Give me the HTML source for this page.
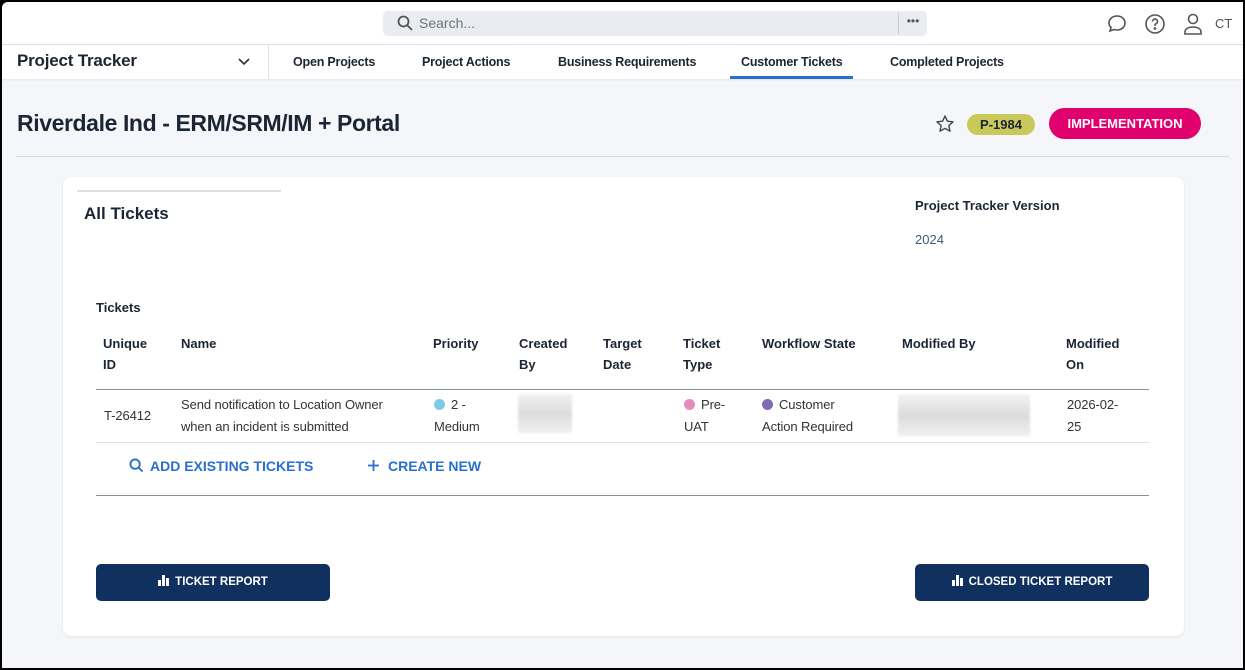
<!DOCTYPE html>
<html><head><meta charset="utf-8"><style>
*{box-sizing:border-box;margin:0;padding:0}
body{width:1245px;height:670px;overflow:hidden;background:#000;font-family:"Liberation Sans",sans-serif;color:#1b2533}
.frame{position:absolute;left:2px;top:2px;width:1241px;height:666px;background:#f5f6f9;border-radius:6px 0 0 0;overflow:hidden}
.top{position:absolute;left:0;top:0;width:100%;height:43px;background:#fff;border-bottom:1px solid #dfe2e6}
.search{position:absolute;left:381px;top:9px;width:544px;height:25px;background:#e9ecf0;border-radius:5px;font-size:14px;color:#6b7480;padding:4px 0 0 36px}
.search .dots{position:absolute;right:0;top:2px;width:29px;height:21px;border-left:1px solid #c9cdd2;text-align:center;font-size:12px;color:#555;line-height:17px}
.nav{position:absolute;left:0;top:43px;width:100%;height:34px;background:#fff;box-shadow:0 1px 2px rgba(0,0,0,.08)}
.nav .pt{position:absolute;left:15px;top:6px;font-size:17px;font-weight:bold;color:#1b2533;letter-spacing:-.2px}
.nav .sep{position:absolute;left:266px;top:0;height:34px;border-left:1px solid #dfe2e6}
.nav a{position:absolute;top:10px;font-size:12.5px;font-weight:bold;color:#1b2533;text-decoration:none;letter-spacing:-.2px}
.ul{position:absolute;left:728px;top:31px;width:123px;height:3px;background:#2a6fcf}
h1{position:absolute;left:15px;top:108px;font-size:23px;font-weight:bold;color:#1b2533;letter-spacing:-.4px}
.pill1{position:absolute;left:965px;top:112px;width:68px;height:21px;border-radius:11px;background:#c9c85a;font-size:13px;font-weight:bold;text-align:center;line-height:21px;color:#1b2533}
.pill2{position:absolute;left:1047px;top:106px;width:152px;height:31px;border-radius:16px;background:#e0006e;color:#fff;font-size:13px;font-weight:bold;text-align:center;line-height:31px}
.hr{position:absolute;left:14px;top:154px;width:1213px;border-top:1px solid #d4d7dc}
.card{position:absolute;left:61px;top:175px;width:1121px;height:459px;background:#fff;border-radius:8px;box-shadow:0 1px 3px rgba(0,0,0,.08)}
.t{position:absolute;font-size:13px;line-height:21px}
.b{font-weight:bold}
.r{color:#333;line-height:22px;letter-spacing:-.1px}
.line{position:absolute;border-top:1px solid #8a8f96}
.btn{position:absolute;top:387px;height:37px;background:#10305f;border-radius:5px;color:#fff;font-size:11.5px;font-weight:bold;text-align:center;line-height:37px}
.dot{display:inline-block;width:11px;height:11px;border-radius:50%;margin-right:6px;vertical-align:-1px}
.blur{position:absolute;background:linear-gradient(#f2f2f2,#dcdcdc,#f0f0f0);filter:blur(1px)}
.lnk{position:absolute;top:281px;color:#2a6fcf;font-size:14px;font-weight:bold;line-height:17px}
</style></head><body><div class="frame">
<div class="top">
<div class="search"><svg style="position:absolute;left:14px;top:4px" width="16" height="16" viewBox="0 0 16 16"><circle cx="6.5" cy="6.5" r="5" fill="none" stroke="#555" stroke-width="1.8"/><path d="M10 10l5 5" stroke="#555" stroke-width="1.8"/></svg>Search...<div class="dots">•••</div></div>
<svg style="position:absolute;left:1104px;top:11px" width="22" height="22" viewBox="0 0 22 22" fill="none" stroke="#555" stroke-width="1.6"><path d="M11 3c4.5 0 8 3 8 7s-3.5 7-8 7c-1 0-2-.2-3-.5L4 18l1-3.5C3.7 13.2 3 11.7 3 10c0-4 3.5-7 8-7z"/></svg>
<svg style="position:absolute;left:1142px;top:11px" width="22" height="22" viewBox="0 0 22 22" fill="none" stroke="#555" stroke-width="1.6"><circle cx="11" cy="11" r="9"/><path d="M8.5 8.5a2.5 2.5 0 1 1 3.5 2.3c-.7.3-1 .8-1 1.5v.7"/><circle cx="11" cy="15.5" r=".6" fill="#555"/></svg>
<svg style="position:absolute;left:1180px;top:10px" width="22" height="24" viewBox="0 0 22 24" fill="none" stroke="#555" stroke-width="1.6"><circle cx="11" cy="7" r="4.5"/><path d="M3 22v-2c0-3 3-5 8-5s8 2 8 5v2z"/></svg>
<div class="t" style="left:1213px;top:11px;color:#555">CT</div>
</div>
<div class="nav"><div class="pt">Project Tracker</div>
<svg style="position:absolute;left:235px;top:12px" width="14" height="10" viewBox="0 0 14 10"><path d="M2 2l5 5 5-5" fill="none" stroke="#333" stroke-width="1.6"/></svg>
<div class="sep"></div>
<a style="left:291px">Open Projects</a><a style="left:420px">Project Actions</a><a style="left:556px">Business Requirements</a><a style="left:739px">Customer Tickets</a><a style="left:888px">Completed Projects</a>
<div class="ul"></div></div>
<h1>Riverdale Ind - ERM/SRM/IM + Portal</h1>
<svg style="position:absolute;left:933px;top:112px" width="20" height="20" viewBox="0 0 20 20"><path d="M10 2l2.4 5.2 5.6.6-4.2 3.8 1.2 5.6L10 14.4 5 17.2l1.2-5.6L2 7.8l5.6-.6z" fill="none" stroke="#444" stroke-width="1.4" stroke-linejoin="round"/></svg>
<div class="pill1">P-1984</div><div class="pill2">IMPLEMENTATION</div>
<div class="hr"></div>
<div class="card">
<div style="position:absolute;left:14px;top:13px;width:204px;border-top:2px solid #dcdfe3"></div>
<div class="t b" style="left:21px;top:26px;font-size:17px">All Tickets</div>
<div class="t b" style="left:852px;top:18px">Project Tracker Version</div>
<div class="t" style="left:852px;top:52px;color:#3b5b7a">2024</div>
<div class="t b" style="left:33px;top:120px">Tickets</div>
<div class="t b" style="left:40px;top:156px">Unique<br>ID</div>
<div class="t b" style="left:118px;top:156px">Name</div>
<div class="t b" style="left:370px;top:156px">Priority</div>
<div class="t b" style="left:456px;top:156px">Created<br>By</div>
<div class="t b" style="left:540px;top:156px">Target<br>Date</div>
<div class="t b" style="left:620px;top:156px">Ticket<br>Type</div>
<div class="t b" style="left:699px;top:156px">Workflow State</div>
<div class="t b" style="left:839px;top:156px">Modified By</div>
<div class="t b" style="left:1003px;top:156px">Modified<br>On</div>
<div class="line" style="left:33px;top:212px;width:1053px"></div>
<div class="t r" style="left:41px;top:228px">T-26412</div>
<div class="t r" style="left:118px;top:217px">Send notification to Location Owner<br>when an incident is submitted</div>
<div class="t r" style="left:371px;top:217px"><span class="dot" style="background:#7ecbe6"></span>2 -<br>Medium</div>
<div class="blur" style="left:455px;top:217px;width:54px;height:39px"></div>
<div class="t r" style="left:621px;top:217px"><span class="dot" style="background:#e58bbd"></span>Pre-<br>UAT</div>
<div class="t r" style="left:699px;top:217px"><span class="dot" style="background:#8069b5"></span>Customer<br>Action Required</div>
<div class="blur" style="left:835px;top:217px;width:132px;height:42px"></div>
<div class="t r" style="left:1004px;top:217px">2026-02-<br>25</div>
<div class="line" style="left:33px;top:265px;width:1053px;border-color:#dcdfe3"></div>
<div class="lnk" style="left:66px"><svg width="15" height="15" viewBox="0 0 16 16" style="vertical-align:-2px;margin-right:6px"><circle cx="6.5" cy="6.5" r="5" fill="none" stroke="#2a6fcf" stroke-width="2"/><path d="M10 10l4.5 4.5" stroke="#2a6fcf" stroke-width="2"/></svg>ADD EXISTING TICKETS</div>
<div class="lnk" style="left:304px"><svg width="13" height="13" viewBox="0 0 13 13" style="vertical-align:-1px;margin-right:8px"><path d="M6.5 1v11M1 6.5h11" stroke="#2a6fcf" stroke-width="1.8"/></svg>CREATE NEW</div>
<div class="line" style="left:33px;top:318px;width:1053px"></div>
<div class="btn" style="left:33px;width:234px"><svg width="11" height="11" viewBox="0 0 11 11" style="vertical-align:-1px;margin-right:6px"><rect x="0" y="5" width="3" height="6" fill="#fff"/><rect x="4" y="0" width="3" height="11" fill="#fff"/><rect x="8" y="3" width="3" height="8" fill="#fff"/></svg>TICKET REPORT</div>
<div class="btn" style="left:852px;width:234px"><svg width="11" height="11" viewBox="0 0 11 11" style="vertical-align:-1px;margin-right:6px"><rect x="0" y="5" width="3" height="6" fill="#fff"/><rect x="4" y="0" width="3" height="11" fill="#fff"/><rect x="8" y="3" width="3" height="8" fill="#fff"/></svg>CLOSED TICKET REPORT</div>
</div>
</div></body></html>
